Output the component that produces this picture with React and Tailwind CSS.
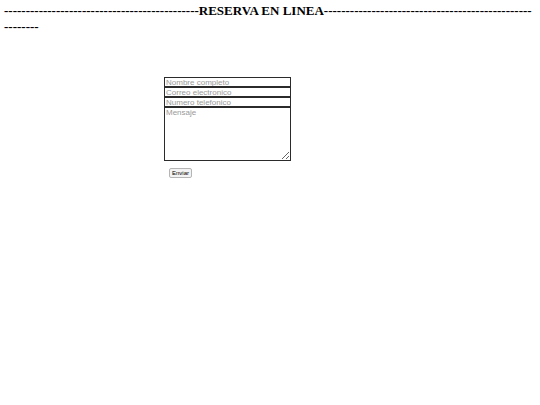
import { useState } from "react"

function App() {

  const [form, setForm] = useState({ nombre: "", correo: "", telefono: "", mensaje: "" })

  const change = (e) => setForm({ ...form, [e.target.name]: e.target.value })

  const fieldClass =
    "block w-[127px] h-[10px] border border-[#2b2b2b] px-[1px] text-[8px] leading-[8px] text-black placeholder:text-[#999999] outline-none bg-white"

  return (

    <div className="min-h-[405px] bg-white font-['Liberation_Sans',Arial,sans-serif]">

      <h1 className="px-[4px] pt-[3px] font-['Liberation_Serif','Times_New_Roman',serif] font-bold text-[13px] leading-[16px] text-black">
        <span className="block whitespace-nowrap">
          {"-".repeat(45)}RESERVA EN LINEA{"-".repeat(48)}
        </span>
        <span className="block whitespace-nowrap">
          {"-".repeat(8)}
        </span>
      </h1>

      <form
        className="ml-[164px] mt-[42px] flex flex-col"
        onSubmit={(e) => e.preventDefault()}
      >

        <input name="nombre" value={form.nombre} onChange={change} placeholder="Nombre completo" className={fieldClass} />

        <input name="correo" value={form.correo} onChange={change} placeholder="Correo electronico" className={fieldClass} />

        <input name="telefono" value={form.telefono} onChange={change} placeholder="Numero telefonico" className={fieldClass} />

        <textarea
          name="mensaje"
          value={form.mensaje}
          onChange={change}
          placeholder="Mensaje"
          className="block w-[127px] h-[54px] border border-[#2b2b2b] px-[1px] py-0 text-[8px] leading-[10px] text-black placeholder:text-[#999999] outline-none bg-white resize"
        />

        <div className="mt-[7px] ml-[5px] flex">
          <button
            type="submit"
            className="h-[10px] px-[2px] text-[6px] leading-[6px] text-black bg-[#f3f3f3] border border-[#b5b5b5] rounded-[2px]"
          >
            Enviar
          </button>
        </div>

      </form>

    </div>
  )
}

export default App
